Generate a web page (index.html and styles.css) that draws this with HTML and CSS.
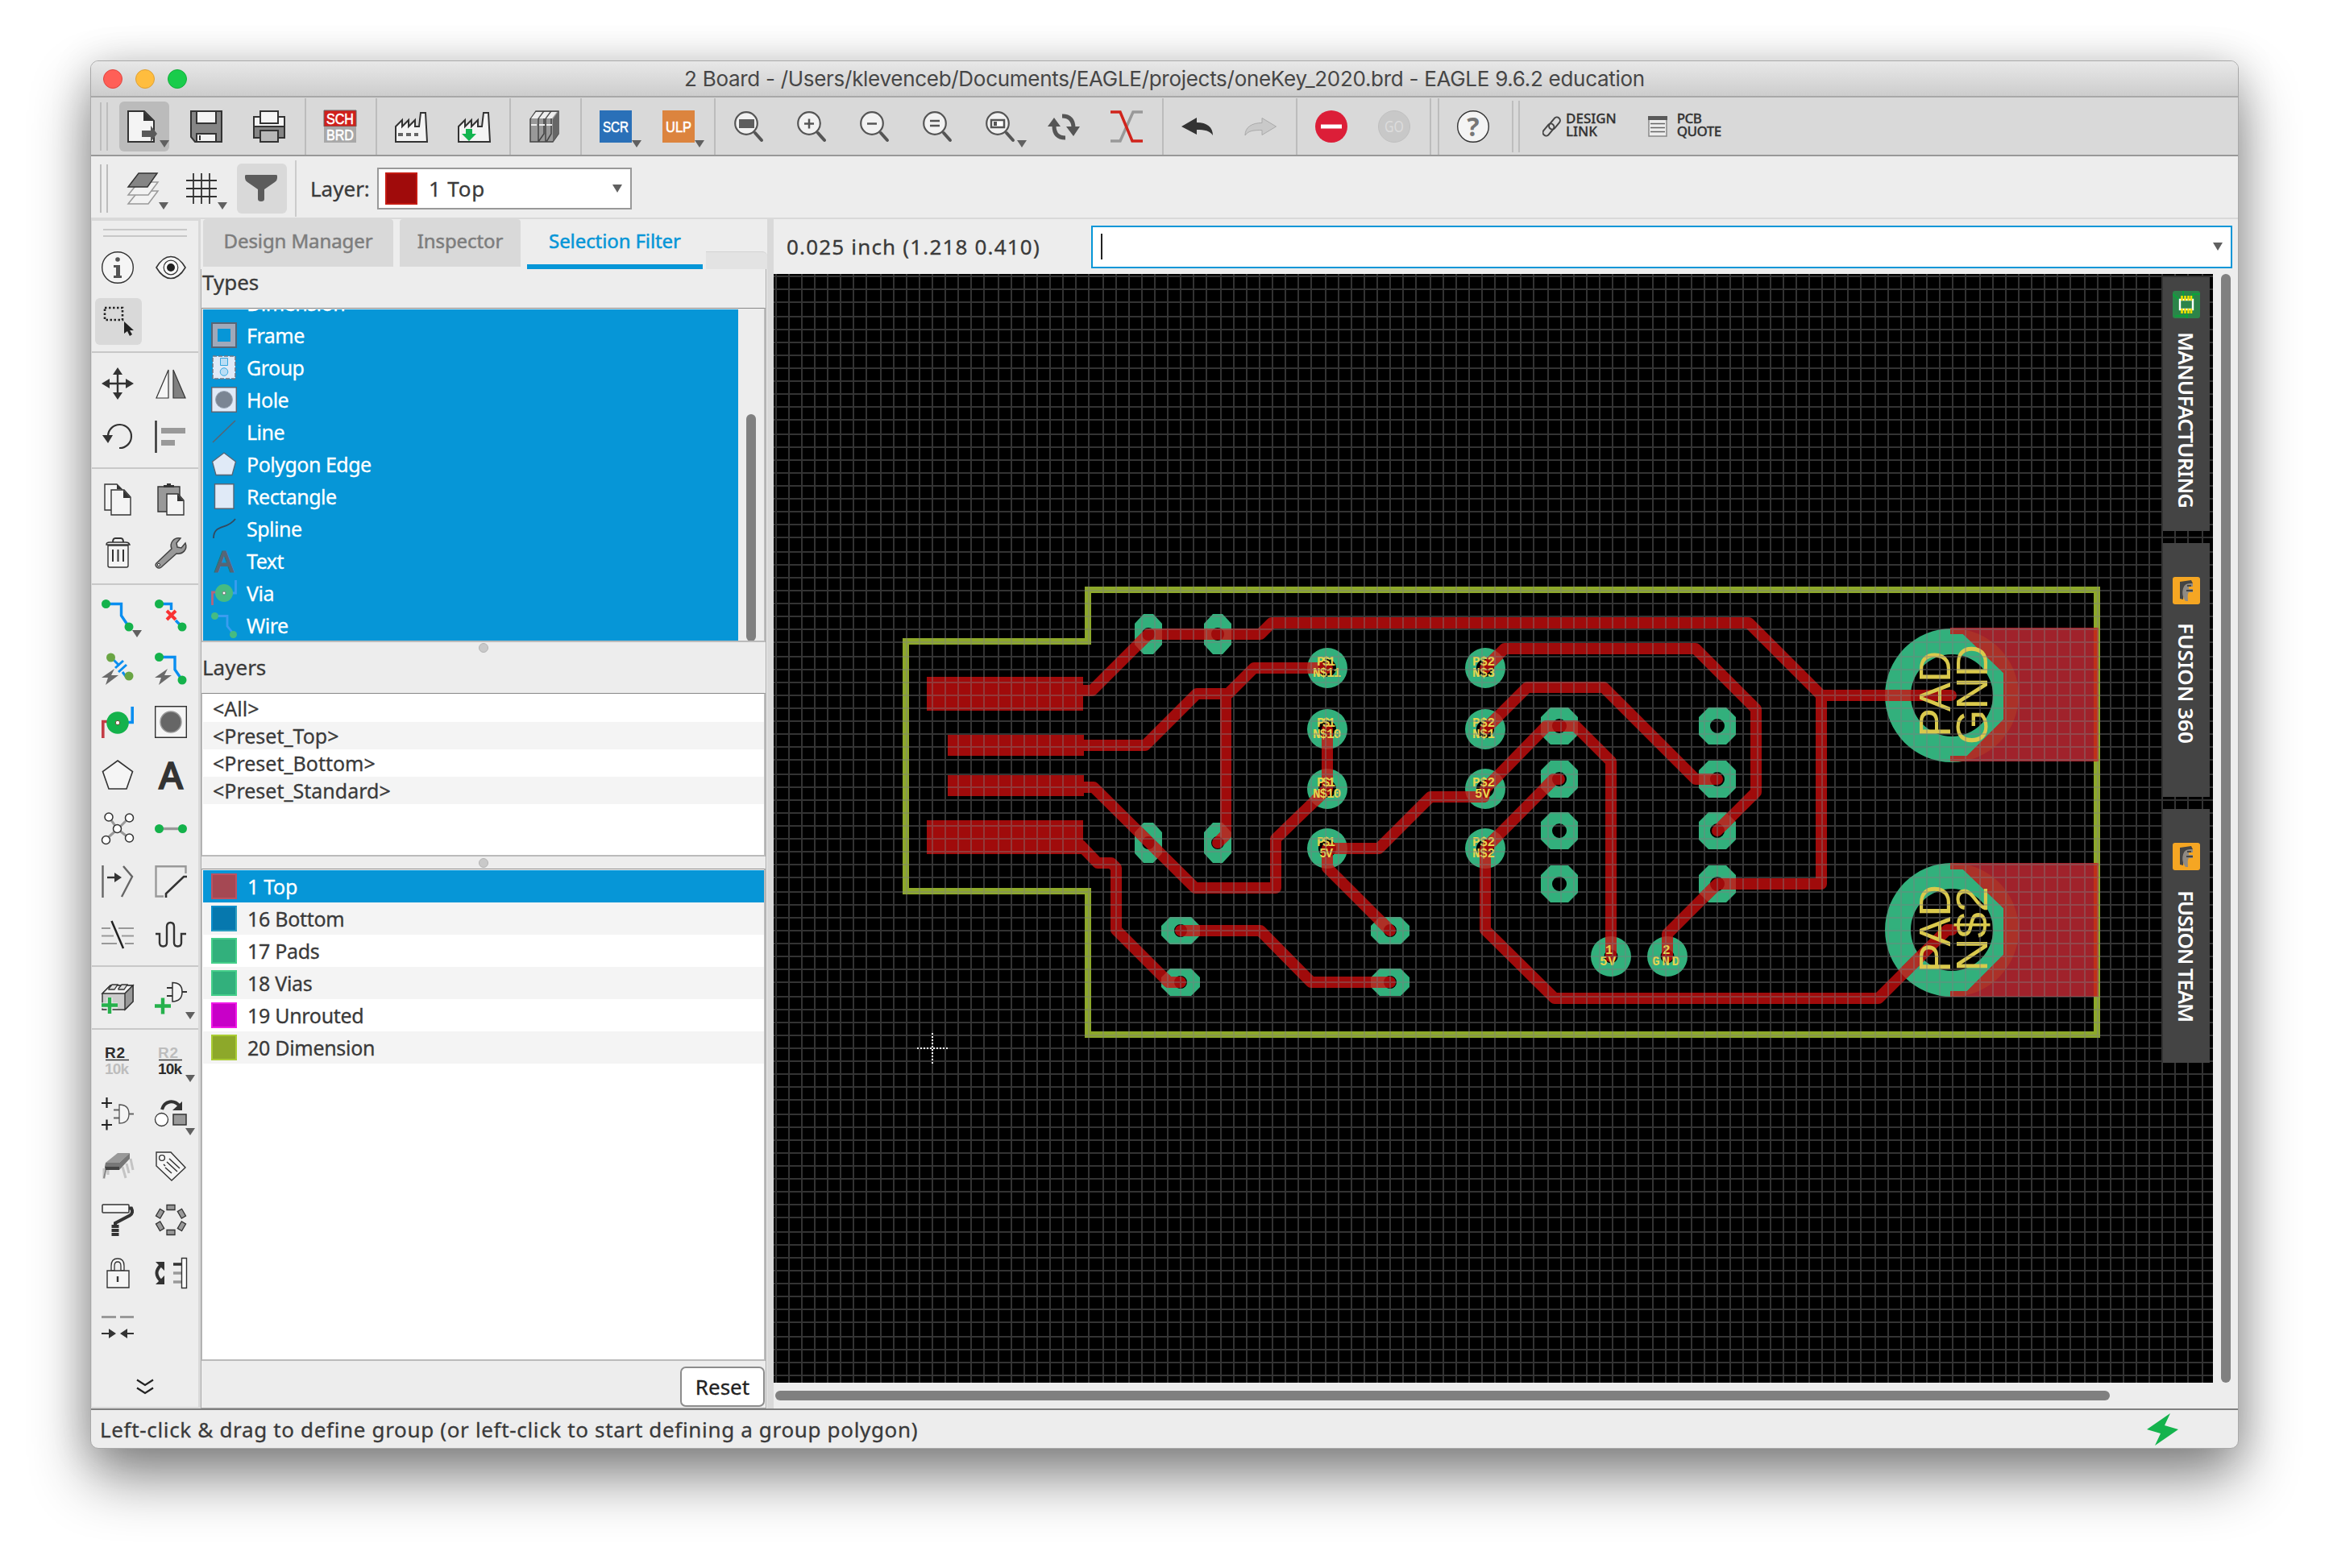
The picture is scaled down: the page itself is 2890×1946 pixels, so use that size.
FILE: index.html
```html
<!DOCTYPE html>
<html lang="en">
<head>
<meta charset="utf-8">
<title>2 Board - EAGLE</title>
<link rel="stylesheet" href="styles.css">
</head>
<body>
<div class="window">
  <header class="titlebar">
    <div class="lights"><i class="light red"></i><i class="light amber"></i><i class="light green"></i></div>
    <span class="title">2 Board - /Users/klevenceb/Documents/EAGLE/projects/oneKey_2020.brd - EAGLE 9.6.2 education</span>
  </header>

  <nav class="toolbar">
    <div class="grip"></div>
    <div class="tool on drop"><svg viewBox="0 0 40 40"><path class="w" d="M1 1h20l12 12v26H1z"/><path d="M20 1v12h12z" fill="#333"/><path d="M18 25h11v-6l8 10-8 10v-6H18z" fill="#5a5a5a"/></svg></div>
    <div class="tool"><svg viewBox="0 0 40 40"><path d="M1 1h38v38H6l-5-6z" fill="#858585" stroke="#333" stroke-width="2"/><path class="w" d="M8 1h24v15H8zM8 29h24v10H8z"/><path d="M12 31v6" stroke="#333" stroke-width="2"/></svg></div>
    <div class="tool"><svg viewBox="0 0 40 40"><path class="w" d="M1 8h38v12H1z"/><path d="M1 20h38v14H1z" fill="#858585" stroke="#333" stroke-width="2"/><path class="w" d="M9 1h22v15H9z"/><path d="M9 25h22v14H9z" fill="#b8b8b8" stroke="#333" stroke-width="2"/></svg></div>
    <div class="sep"></div>
    <div class="tool"><svg viewBox="0 0 40 40"><path d="M0 0h40v20H0z" fill="#d0201b" stroke="#666"/><path d="M0 20h40v20H0z" fill="#a8a8a8"/><text x="20" y="17" class="pix" textLength="34" lengthAdjust="spacingAndGlyphs">SCH</text><text x="20" y="37" class="pix" textLength="34" lengthAdjust="spacingAndGlyphs">BRD</text></svg></div>
    <div class="sep"></div>
    <div class="tool"><svg viewBox="0 0 40 40"><path class="w" d="M1 39V20l8-8v8l8-8v8l8-8v8l5-0 2-17h6l2 36z"/><path d="M4 30h6M14 30h6M24 30h5" stroke="#666" stroke-width="4"/></svg></div>
    <div class="tool"><svg viewBox="0 0 40 40"><path class="w" d="M1 39V20l8-8v8l8-8v8l8-8v8l5-0 2-17h6l2 36z"/><path d="M10 23h8v6h5l-9 9-9-9h5z" fill="#14b550"/></svg></div>
    <div class="sep"></div>
    <div class="tool"><svg viewBox="0 0 40 40"><path d="M2 11 9 1h10v28l-7 10H2z M12 11 19 1h9v28l-6 10H12z M21 11 28 1h9v28l-7 10h-9z" fill="#999" stroke="#444" stroke-width="1.5"/><path d="M30 11 37 1v28l-7 10z" fill="#666"/><path d="M3 10 9 2h8l-6 8zM13 10l6-8h7l-6 8zM22 10l6-8h7l-6 8z" fill="#eee"/><path d="M3 18h7M13 18h7M22 18h7" stroke="#eee" stroke-width="2"/></svg></div>
    <div class="sep"></div>
    <div class="tool drop"><svg viewBox="0 0 40 40"><path d="M0 0h40v40H0z" fill="#2a70b8"/><text x="20" y="27" class="pix" textLength="32" lengthAdjust="spacingAndGlyphs">SCR</text></svg></div>
    <div class="tool drop"><svg viewBox="0 0 40 40"><path d="M0 0h40v40H0z" fill="#dc843e"/><text x="20" y="27" class="pix" textLength="32" lengthAdjust="spacingAndGlyphs">ULP</text></svg></div>
    <div class="sep"></div>
    <div class="tool"><svg viewBox="0 0 40 40"><use href="#lens"/><path d="M7 11h19v11H7z" fill="#5e5e5e"/></svg></div>
    <div class="tool"><svg viewBox="0 0 40 40"><use href="#lens"/><path d="M10 16.500h12M16 10.500v12" stroke="#555" stroke-width="2.500"/></svg></div>
    <div class="tool"><svg viewBox="0 0 40 40"><use href="#lens"/><path d="M10 16.500h12" stroke="#555" stroke-width="2.500"/></svg></div>
    <div class="tool"><svg viewBox="0 0 40 40"><use href="#lens"/><path d="M10 13h12M10 19h12" stroke="#555" stroke-width="2.500"/></svg></div>
    <div class="tool drop"><svg viewBox="0 0 40 40"><use href="#lens"/><path d="M8 12h16v9H8z" fill="#fff" stroke="#555" stroke-width="2.500"/><path d="M11 14h4v5h-4z" fill="#555"/></svg></div>
    <div class="tool"><svg viewBox="0 0 40 40"><path d="M18 7c11 0 14 7 14 15M22 34c-11 0-14-7-14-15" fill="none" stroke="#555" stroke-width="5"/><path d="M23 20h17l-8 12zM0 20h16L8 9z" fill="#555"/></svg></div>
    <div class="tool"><svg viewBox="0 0 40 40"><path d="M0 38h12L28 2h12" fill="none" stroke="#999" stroke-width="3.500"/><path d="M0 2h12l15 36h13" fill="none" stroke="#d0241c" stroke-width="3.500"/></svg></div>
    <div class="sep"></div>
    <div class="tool"><svg viewBox="0 0 40 40"><path d="M0 20 19 9v6c13 0 20 6 20 16-4-6-10-7-20-7v6z" fill="#333"/></svg></div>
    <div class="tool"><svg viewBox="0 0 40 40"><path d="M39.500 20 22 9.500v6C9 15.500 1 21 1 31c4-6 11-6.500 21-6.500v6z" fill="#c9c9c9" stroke="#aaa"/></svg></div>
    <div class="sep"></div>
    <div class="tool"><svg viewBox="0 0 40 40"><circle cx="20" cy="20" r="20" fill="#dc1e38"/><path d="M7 17.500h26v5H7z" fill="#fff"/></svg></div>
    <div class="tool"><svg viewBox="0 0 40 40"><circle cx="20" cy="20" r="19.500" fill="#c8c8c8" stroke="#c0c0c0"/><text x="20" y="27" text-anchor="middle" class="go" textLength="24" lengthAdjust="spacingAndGlyphs">GO</text></svg></div>
    <div class="sep"></div><div class="sep"></div>
    <div class="tool"><svg viewBox="0 0 40 40"><circle cx="20" cy="20" r="19.300" fill="#f4f4f4" stroke="#333" stroke-width="1.400"/><text x="20" y="32" text-anchor="middle" class="help">?</text></svg></div>
    <div class="grip late"></div>
    <a class="link"><svg width="24" height="28" viewBox="0 0 24 28"><g fill="none" stroke="#444" stroke-width="2"><rect x="-4" y="-8.500" width="8" height="17" rx="4" transform="translate(7.500 18) rotate(40)"/><rect x="-4" y="-8.500" width="8" height="17" rx="4" transform="translate(15 10) rotate(40)"/></g></svg><span>DESIGN<br>LINK</span></a>
    <a class="link pcb"><svg width="24" height="26" viewBox="0 0 24 26"><path d="M1 1h22v24H1z" fill="#eee" stroke="#888" stroke-width="1.500"/><path d="M0 0h24v5H0z" fill="#5a5a5a"/><path d="M3 9.500h18M3 14.500h18M3 19.500h18" stroke="#666" stroke-width="1.500"/></svg><span>PCB<br>QUOTE</span></a>
  </nav>

  <nav class="toolbar second">
    <div class="grip"></div>
    <div class="tool drop lay"><svg viewBox="0 0 40 40"><g fill="#f2f2f2" stroke="#999" stroke-width="1.500"><path d="M15 23h24l-12 16H2z"/><path d="M15 12h24L27 28H2z"/></g><path d="M15 1h23L26 18H2z" fill="#858585" stroke="#333" stroke-width="1.500"/></svg></div>
    <div class="tool drop grd"><svg viewBox="0 0 40 40"><path d="M10 1v38M20 1v38M30 1v38M1 10h38M1 20h38M1 30h38" stroke="#333" stroke-width="1.800"/></svg></div>
    <div class="tool on filt"><svg viewBox="0 0 40 40"><path d="M0 4q0-1 2-1h36q2 0 2 1v3q0 3-3 5L24 21v12q0 3-4 3t-4-3V21L3 12Q0 10 0 7z" fill="#5c5c5c"/></svg></div>
    <div class="sep tall"></div>
    <label class="lbl t26">Layer:</label>
    <div class="combo"><i class="swatch"></i><span class="t26 wide">1 Top</span><i class="caret-down"></i></div>
  </nav>

  <main class="main">
    <aside class="side">
      <div class="hgrip"></div>
      <div class="cells">
        <div class="c"><svg viewBox="0 0 40 40"><circle cx="20" cy="20" r="19.300" fill="#f5f5f5" stroke="#333" stroke-width="1.400"/><circle cx="20" cy="10" r="2.800" fill="#555"/><path d="M15 17h8v13h2v3H15v-3h3V20h-3z" fill="#555"/></svg></div>
        <div class="c"><svg viewBox="0 0 40 40"><path d="M2 20Q10 6.500 20 6.500T38 20Q30 33.500 20 33.500T2 20z" fill="#f5f5f5" stroke="#333" stroke-width="1.600"/><circle cx="20" cy="20" r="8.800" fill="#fff" stroke="#333" stroke-width="1.200"/><circle cx="20" cy="20" r="5" fill="#222"/></svg></div>
        <div class="c"><div class="pressed"><svg viewBox="0 0 40 40"><path d="M3 3h22v15H3z" fill="none" stroke="#222" stroke-width="2.600" stroke-dasharray="2.500 2.500"/><path d="M27 20v15l4-3 3 6 3-2-3-5h5z" fill="#222"/></svg></div></div><div class="c"></div>
      </div>
      <div class="hsep"></div>
      <div class="cells">
        <div class="c"><svg viewBox="0 0 40 40"><path d="M7 20h26M20 7v26" stroke="#333" stroke-width="2.400"/><path d="M20 0l6 9H14zM20 40l6-9H14zM0 20l10-6v12zM40 20l-10-6v12z" fill="#333"/></svg></div>
        <div class="c"><svg viewBox="0 0 40 40"><path d="M17 3v35H2z" fill="#f5f5f5" stroke="#333" stroke-width="1.200"/><path d="M23 3v35h15z" fill="#808080" stroke="#333" stroke-width="1.200"/></svg></div>
        <div class="c"><svg viewBox="0 0 40 40"><path d="M8 19A14.500 14.500 0 1 1 22 34" fill="none" stroke="#333" stroke-width="2.200"/><path d="M1 18h13l-6 10z" fill="#333"/></svg></div>
        <div class="c"><svg viewBox="0 0 40 40"><path d="M1.500 0v40" stroke="#333" stroke-width="2.500"/><path d="M8 9h30v7H8zM8 24h17v7H8z" fill="#999"/></svg></div>
      </div>
      <div class="hsep"></div>
      <div class="cells">
        <div class="c"><svg viewBox="0 0 40 40"><path class="w s" d="M4 1h15l6 6v26H4z"/><path class="w s" d="M12 8h16l8 9v22H12z"/><path d="M27 8v10h9zM19 1v6h6z" fill="#333"/></svg></div>
        <div class="c"><svg viewBox="0 0 40 40"><path d="M4 4h27v31H4z" fill="#999" stroke="#333" stroke-width="1.400"/><path d="M11 5V2h4V0h5v2h4v3z" fill="#333"/><path class="w s" d="M15 13h14l7 8v18H15z"/><path d="M28 13v9h8z" fill="#333"/></svg></div>
        <div class="c"><svg viewBox="0 0 40 40"><path class="w s" d="M8 11h25v25q0 2-2 2H10q-2 0-2-2z"/><path class="w s" d="M6 10q0-3 4-3h20q4 0 5 3z"/><path d="M14 7q0-5 3-5h7q3 0 3 5M14 16v15M20.500 16v15M27 16v15" fill="none" stroke="#333" stroke-width="2"/></svg></div>
        <div class="c"><svg viewBox="0 0 40 40"><path d="M2 33 21 15C18 8 24 0 32 2l-5 6 1 5 5 1 5-6c3 8-3 14-11 13L8 38c-4 3-9-2-6-5z" fill="#999" stroke="#444" stroke-width="1.500"/><circle cx="5" cy="35" r="1.600" fill="#fff" stroke="#333"/></svg></div>
      </div>
      <div class="hsep"></div>
      <div class="cells">
        <div class="c drop"><svg viewBox="0 0 40 40"><path d="M6 5.500h18.500V20L34 34" fill="none" stroke="#0a8ef0" stroke-width="3.400"/><circle cx="5.500" cy="5.500" r="5.500" fill="#14b24b"/><circle cx="34" cy="34" r="5.500" fill="#14b24b"/></svg></div>
        <div class="c"><svg viewBox="0 0 40 40"><path d="M6 5.500h14.500V13M26 26l8 8" fill="none" stroke="#0a8ef0" stroke-width="3.400"/><circle cx="5.500" cy="5.500" r="5.500" fill="#14b24b"/><circle cx="34" cy="34" r="5.500" fill="#14b24b"/><path d="M15 14l11 11M26 14 15 25" stroke="#f93232" stroke-width="4"/></svg></div>
        <div class="c"><svg viewBox="0 0 40 40"><path d="M14 8l8 8M26 24l6 8" stroke="#0a8ef0" stroke-width="3"/><path d="M17 19l10-9M21 24l10-9" stroke="#0a8ef0" stroke-width="3"/><circle cx="11.500" cy="6" r="5.500" fill="#6aa544"/><circle cx="34" cy="29" r="5.500" fill="#6aa544"/><path d="M16 20 0 31h8L5 40l16-12h-9z" fill="#6a6a6a"/></svg></div>
        <div class="c"><svg viewBox="0 0 40 40"><path d="M6 5.500h19V21L34 34" fill="none" stroke="#0a8ef0" stroke-width="3.400"/><circle cx="5.500" cy="5.500" r="5.500" fill="#14b24b"/><circle cx="34" cy="34" r="5.500" fill="#14b24b"/><path d="M16 20 0 31h8L5 40l16-12h-9z" fill="#6a6a6a"/></svg></div>
        <div class="c"><svg viewBox="0 0 40 40"><path d="M8 19.500H1.800V40" fill="none" stroke="#c43d46" stroke-width="3.600"/><path d="M32 20.500h6.200V1" fill="none" stroke="#0a8ef0" stroke-width="3.600"/><circle cx="20" cy="21" r="13.800" fill="#14b24b"/><circle cx="20" cy="21" r="2.700" fill="#fff" stroke="#6a5030"/></svg></div>
        <div class="c"><svg viewBox="0 0 40 40"><path d="M.7.700h38.600v38.600H.7z" fill="#f5f5f5" stroke="#333" stroke-width="1.400"/><circle cx="20" cy="20" r="13" fill="#666" stroke="#999" stroke-width="1.500"/></svg></div>
        <div class="c"><svg viewBox="0 0 40 40"><path d="M20 2l18.500 13.500L31 37H9L1.500 15.500z" fill="#f5f5f5" stroke="#333" stroke-width="1.600"/></svg></div>
        <div class="c"><svg viewBox="0 0 40 40"><text x="20" y="37" text-anchor="middle" class="bigA">A</text></svg></div>
        <div class="c"><svg viewBox="0 0 40 40"><path d="M9 6l11 15L34 7M5 34l15-13 14 11" fill="none" stroke="#999" stroke-width="3"/><g fill="#fff" stroke="#333" stroke-width="1.500"><circle cx="9" cy="6" r="5"/><circle cx="34.500" cy="7" r="5"/><circle cx="19.500" cy="20.500" r="5"/><circle cx="5.500" cy="34.500" r="5"/><circle cx="34.500" cy="32" r="5"/></g></svg></div>
        <div class="c"><svg viewBox="0 0 40 40"><path d="M6 20.500h28" stroke="#999" stroke-width="3.400"/><circle cx="5.500" cy="20.500" r="5.500" fill="#14b24b"/><circle cx="34.500" cy="20.500" r="5.500" fill="#14b24b"/></svg></div>
        <div class="c"><svg viewBox="0 0 40 40"><path d="M1.500 0v40M27 1l11 13-13 25" fill="none" stroke="#666" stroke-width="2.400"/><path d="M7 15h10" stroke="#333" stroke-width="2.400"/><path d="M16 9l9 6-9 6z" fill="#333"/></svg></div>
        <div class="c"><svg viewBox="0 0 40 40"><path d="M38.500 10V1.200H1.500v37.300H11" fill="none" stroke="#999" stroke-width="2.400"/><path d="M40 14h-4L14 35v5" fill="none" stroke="#333" stroke-width="2.600"/></svg></div>
        <div class="c"><svg viewBox="0 0 40 40"><path d="M0 12h11M21 12h19M0 21.500h15M25 21.500h15M0 31h19M29 31h11" stroke="#999" stroke-width="2.200"/><path d="M12.500 3 27 37" stroke="#222" stroke-width="2.500"/></svg></div>
        <div class="c"><svg viewBox="0 0 40 40"><path d="M1 19h5v11q0 4.500 4.500 4.500T15 30V10q0-5 4.500-5T24 10v20q0 4.500 4.500 4.500T33 30V19h6" fill="none" stroke="#333" stroke-width="2.400"/></svg></div>
      </div>
      <div class="hsep"></div>
      <div class="cells">
        <div class="c"><svg viewBox="0 0 40 40"><path d="M1 15 11 5h28v20L29 35H1z" fill="#ccc" stroke="#333" stroke-width="1.400"/><path d="M1 15 11 5h28L29 15z" fill="#f3f3f3" stroke="#333" stroke-width="1.400"/><path d="M29 15 39 5v20L29 35z" fill="#999" stroke="#333" stroke-width="1.400"/><path d="M9 9l4-5h7l-4 6H9zM21 9l4-5h7l-4 6h-7z" fill="#ddd" stroke="#333" stroke-width="1.300"/><path d="M10 20v20M0 30h20" stroke="#ededed" stroke-width="7"/><path d="M10 20v20M0 29.500h20" stroke="#26b14c" stroke-width="4.400"/></svg></div>
        <div class="c drop"><svg viewBox="0 0 40 40"><path d="M15 8h7M15 18h7M33 13h7" stroke="#333" stroke-width="2.200"/><path d="M22 1.500q12 0 12 11.500T22 25z" fill="#f5f5f5" stroke="#333" stroke-width="1.500"/><path d="M10 20.500v20M0 30.500h20" stroke="#26b14c" stroke-width="4.400"/></svg></div>
      </div>
      <div class="hsep"></div>
      <div class="cells">
        <div class="c"><svg viewBox="0 0 40 40"><text x="4" y="16.500" class="r2" textLength="25">R2</text><text x="4" y="37" class="r2 dim" textLength="30">10k</text><path d="M5 19.500h29" stroke="#333" stroke-width="1.400"/></svg></div>
        <div class="c drop"><svg viewBox="0 0 40 40"><text x="4" y="16.500" class="r2 dim" textLength="25">R2</text><text x="4" y="37" class="r2" textLength="30">10k</text><path d="M5 19.500h29" stroke="#333" stroke-width="1.400"/></svg></div>
        <div class="c"><svg viewBox="0 0 40 40"><path d="M0 7h13M6.500 0v13M0 34h13M6.500 27.500v13" stroke="#222" stroke-width="2.200"/><path d="M15 15.500h7M15 25.500h7M33 20.500h7" stroke="#666" stroke-width="2.200"/><path d="M22 9q12 0 12 11.500T22 32z" fill="#f5f5f5" stroke="#555" stroke-width="1.300"/></svg></div>
        <div class="c drop"><svg viewBox="0 0 40 40"><path d="M9 15C12 4 24 2 31 11" fill="none" stroke="#333" stroke-width="4"/><path d="M34 5v11H22z" fill="#333"/><circle cx="8.500" cy="27.500" r="8" fill="#fff" stroke="#333" stroke-width="1.300"/><path d="M23 21h16v13H23z" fill="#999" stroke="#333" stroke-width="1.500"/></svg></div>
        <div class="c"><svg viewBox="0 0 40 40"><path d="M3 22v13M8 22v8M26 20l4 14M31 16l3 12M36 10l3 14" stroke="#c4c4c4" stroke-width="3"/><path d="M3 34l3-13" stroke="#888" stroke-width="2"/><path d="M5 15 20 3h15L22 15z" fill="#999"/><path d="M22 15 35 3v7L22 24z" fill="#777"/><path d="M5 15h17v5H4z" fill="#777"/><path d="M4 20h18v4H5z" fill="#444"/></svg></div>
        <div class="c"><svg viewBox="0 0 40 40"><path d="M2 2h18l18 19-17 16L2 19z" fill="#f5f5f5" stroke="#333" stroke-width="1.400"/><circle cx="9" cy="9" r="3.400" fill="#fff" stroke="#333" stroke-width="1.400"/><path d="M18 10l13 12M15 14l13 12M13 21l8 7M11 17l2 2" stroke="#333" stroke-width="1.500"/></svg></div>
        <div class="c"><svg viewBox="0 0 40 40"><rect x="1" y="1" width="33" height="10" rx="1" fill="#f5f5f5" stroke="#333" stroke-width="1.500"/><path d="M34 5.500h3q3 6-2 9L17 24v3" fill="none" stroke="#333" stroke-width="4"/><path d="M17 26v15" stroke="#333" stroke-width="9" stroke-dasharray="4 1"/></svg></div>
        <div class="c"><svg viewBox="0 0 40 40"><g fill="#999" stroke="#333" stroke-width="1.300"><path id="rp" d="M15 1.500h10v6H15z"/><use href="#rp" transform="rotate(60 20 20)"/><use href="#rp" transform="rotate(120 20 20)"/><use href="#rp" transform="rotate(180 20 20)"/><use href="#rp" transform="rotate(240 20 20)"/><use href="#rp" transform="rotate(300 20 20)"/></g></svg></div>
        <div class="c"><svg viewBox="0 0 40 40"><path d="M12 17v-6q0-9 8-9t8 9v6h-4v-6q0-5-4-5t-4 5v6z" fill="#f5f5f5" stroke="#333" stroke-width="1.300"/><path d="M7 17h27v21H7z" fill="#f5f5f5" stroke="#333" stroke-width="1.400"/><path d="M20 24v7" stroke="#333" stroke-width="2.400"/></svg></div>
        <div class="c"><svg viewBox="0 0 40 40"><path d="M9 9Q-4 20 9 31" fill="none" stroke="#333" stroke-width="4"/><path d="M1 6h11v11zM1 34h11V23z" fill="#333"/><path d="M23 9h10" stroke="#333" stroke-width="3.500"/><path d="M23 20h10M23 31h10" stroke="#999" stroke-width="3.500"/><path d="M33.500 1.500h6v37h-6z" fill="#fff" stroke="#333" stroke-width="1.400"/></svg></div>
        <div class="c"><svg viewBox="0 0 40 40"><path d="M0 8.500h18M23 8.500h17" stroke="#999" stroke-width="3"/><path d="M0 29h10M30 29h10" stroke="#333" stroke-width="2.200"/><path d="M9 23l9 6-9 6zM32 23l-9 6 9 6z" fill="#333"/></svg></div><div class="c"></div>
      </div>
      <div class="more"><svg width="22" height="20" viewBox="0 0 22 20"><path d="M1 1.500 11 8 21 1.500M1 11.500 11 18 21 11.500" fill="none" stroke="#222" stroke-width="2.200"/></svg></div>
    </aside>

    <section class="panel">
      <div class="tabs"><span class="tab dm">Design Manager</span><span class="tab insp">Inspector</span><span class="tab sf">Selection Filter</span><span class="stub"></span></div>
      <div class="pbody">
        <div class="head t26">Types</div>
        <div class="list types">
          <ul>
            <li><svg viewBox="0 0 32 32"><path d="M1 0v24M31 0v24M1 8h30" stroke="#a0a9ba" stroke-width="2" fill="none"/></svg><span>Dimension</span></li>
            <li><svg viewBox="0 0 32 32"><path d="M1 1h30v30H1z" fill="#a0a9ba" stroke="#566575" stroke-width="2"/><path d="M8 8h16v16H8z" fill="#0696d7"/></svg><span>Frame</span></li>
            <li><svg viewBox="0 0 32 32"><path d="M2 2h28v28H2z" fill="#e0eaf7" stroke="#6b7685" stroke-width="1.500" stroke-dasharray="5 2"/><path d="M11.500 4.500h9v9h-9z" fill="#b9ddf5" stroke="#35a7df"/><circle cx="16" cy="21.500" r="4.800" fill="#b9ddf5" stroke="#35a7df"/></svg><span>Group</span></li>
            <li><svg viewBox="0 0 32 32"><path d="M.7.700h30.600v30.600H.7z" fill="#e0eaf7" stroke="#566575" stroke-width="1.400"/><circle cx="16" cy="16" r="10.500" fill="#7a8593" stroke="#9aa6b5"/></svg><span>Hole</span></li>
            <li><svg viewBox="0 0 32 32"><path d="M2 29 30 2" stroke="#566575" stroke-width="1.600"/></svg><span>Line</span></li>
            <li><svg viewBox="0 0 32 32"><path d="M16 2l14.500 11L26 29.500H6L1.500 13z" fill="#e0eaf7" stroke="#566575" stroke-width="1.300"/></svg><span>Polygon Edge</span></li>
            <li><svg viewBox="0 0 32 32"><path d="M4.500.700h23.500v30.600H4.500z" fill="#e0eaf7" stroke="#566575" stroke-width="1.400"/></svg><span>Rectangle</span></li>
            <li><svg viewBox="0 0 32 32"><path d="M3 28C3 10 20 18 30 4" fill="none" stroke="#34495e" stroke-width="1.800"/></svg><span>Spline</span></li>
            <li><svg viewBox="0 0 32 32"><text x="16" y="30" text-anchor="middle" class="smA">A</text></svg><span>Text</span></li>
            <li><svg viewBox="0 0 32 32"><path d="M7 15H1.500v16" fill="none" stroke="#b5657c" stroke-width="2.800"/><path d="M25 16h5.500V0" fill="none" stroke="#3a9df0" stroke-width="2.800"/><circle cx="16" cy="16" r="11" fill="#46bb82"/><circle cx="16" cy="16" r="2" fill="#fff" stroke="#777"/></svg><span>Via</span></li>
            <li><svg viewBox="0 0 32 32"><path d="M5 4.500h15V17l8 10" fill="none" stroke="#3a9df0" stroke-width="2.800"/><circle cx="4.500" cy="4.500" r="4.500" fill="#46bb82"/><circle cx="27.500" cy="27.500" r="4.500" fill="#46bb82"/></svg><span>Wire</span></li>
          </ul>
          <div class="track"><i></i></div>
        </div>
        <div class="split"><i></i></div>
        <div class="head lh t26">Layers</div>
        <div class="list presets"><p>&lt;All&gt;</p><p>&lt;Preset_Top&gt;</p><p>&lt;Preset_Bottom&gt;</p><p>&lt;Preset_Standard&gt;</p></div>
        <div class="split s2"><i></i></div>
        <div class="list layers">
          <p class="sel"><i class="l1"></i><span>1 Top</span></p>
          <p><i class="l16"></i><span>16 Bottom</span></p>
          <p><i class="l17"></i><span>17 Pads</span></p>
          <p><i class="l17"></i><span>18 Vias</span></p>
          <p><i class="l19"></i><span>19 Unrouted</span></p>
          <p><i class="l20"></i><span>20 Dimension</span></p>
        </div>
        <div class="foot"><button class="t26">Reset</button></div>
      </div>
    </section>

    <section class="work">
      <div class="cmd"><span class="coord t26">0.025 inch (1.218 0.410)</span><div class="entry"><i class="cursor"></i><i class="caret-down"></i></div></div>
      <div class="view">
        <div class="canvas">
          <svg class="board" width="1786" height="1376" viewBox="960 340 1786 1376">
            <defs>
              <path id="ov" d="M-6-25H6L17-13V13L6 25H-6L-17 13V-13zM0-8A8 8 0 0 0 0 8 8 8 0 0 0 0-8z"/>
              <path id="oh" d="M-13-17H13L24-6V6L13 17H-13L-24 6V-6zM0-8A8 8 0 0 0 0 8 8 8 0 0 0 0-8z"/>
              <path id="oc" d="M-11-23H11L23-11V11L11 23H-11L-23 11V-11zM0-9A9 9 0 0 0 0 9 9 9 0 0 0 0-9z"/>
              <path id="rd" d="M0-25A25 25 0 0 1 0 25 25 25 0 0 1 0-25zM0-11A11 11 0 0 0 0 11 11 11 0 0 0 0-11z"/>
              <path id="rs" d="M0-25A25 25 0 0 1 0 25 25 25 0 0 1 0-25zM0-8.500A8.500 8.500 0 0 0 0 8.500 8.500 8.500 0 0 0 0-8.500z"/>
              <path id="bg" d="M0-83A83 83 0 0 1 0 83 83 83 0 0 1 0-83zM0-51A51 51 0 0 0 0 51 51 51 0 0 0 0-51z"/>
              <path id="land" d="M-2-84H182V82H-2V75H19L64 30V-28L14-76H-2z"/>
              <clipPath id="padclip">
                <use href="#ov" x="1425" y="787"/><use href="#ov" x="1511" y="787"/><use href="#ov" x="1425" y="1046"/><use href="#ov" x="1511" y="1046"/>
                <use href="#oh" x="1465" y="1155"/><use href="#oh" x="1465" y="1219"/><use href="#oh" x="1725" y="1155"/><use href="#oh" x="1725" y="1219"/>
                <use href="#rd" x="1647" y="829"/><use href="#rd" x="1647" y="905"/><use href="#rd" x="1647" y="979"/><use href="#rd" x="1647" y="1053"/>
                <use href="#rd" x="1843" y="829"/><use href="#rd" x="1843" y="905"/><use href="#rd" x="1843" y="979"/><use href="#rd" x="1843" y="1053"/>
                <use href="#rs" x="1999" y="1187"/><use href="#rs" x="2069" y="1187"/>
                <use href="#oc" x="1935" y="901"/><use href="#oc" x="1935" y="967"/><use href="#oc" x="1935" y="1031"/><use href="#oc" x="1935" y="1097"/>
                <use href="#oc" x="2131" y="901"/><use href="#oc" x="2131" y="967"/><use href="#oc" x="2131" y="1031"/><use href="#oc" x="2131" y="1097"/>
                <use href="#bg" x="2422" y="863"/><use href="#bg" x="2422" y="1154"/>
              </clipPath>
              <g id="copper" fill="none" stroke-width="14" stroke-linecap="round" stroke-linejoin="round">
                <path d="M1344 857h11l70-70h139l14-14h592l90 90h161M2260 863v234H2131l-62 62v28"/>
                <path d="M1344 925h77l64-64h39l32-32h91M1521 861v175l-10 10"/>
                <path d="M1344 977h13l126 125h100v-61l64-62v-74"/>
                <path d="M1341 1049l21 22h17l6 6v77l65 65h15M1465 1155h99l63 64h98"/>
                <path d="M1725 1155l-78-78v-24h64l64-64h66l2-10 76-78h36l44 44v242"/>
                <path d="M1843 829l24-24h237l75 75v103l-48 48M1843 905l52-52h95l114 114h27"/>
                <path d="M1935 967h-7l-85 86v101l86 85h402l85-85h6"/>
              </g>
            </defs>
            <path class="outline" d="M1124 796h226v-64h1252v552H1350v-178H1124z"/>
            <path class="pads" clip-path="url(#padclip)" d="M960 340h1786v1376H960z"/>
            <path class="cu" d="M1150 840h194v42h-194zM1176 912h169v26h-169zM1176 962h169v26h-169zM1150 1018h194v42h-194z"/>
            <use href="#copper" stroke="#a00b0b"/>
            <g clip-path="url(#padclip)"><use href="#copper" stroke="#ae3026"/></g>
            <g fill="#a0222b"><use href="#land" x="2422" y="863"/><use href="#land" x="2422" y="1155"/></g>
            <g clip-path="url(#padclip)" fill="#ab3128"><use href="#land" x="2422" y="863"/><use href="#land" x="2422" y="1155"/></g>
            <path d="M2598 779h6v166h-6zM2598 1071h6v166h-6z" fill="#c03018"/>
            <g class="big">
              <text transform="translate(2420 915) rotate(-90)" textLength="107" lengthAdjust="spacingAndGlyphs">PAD</text>
              <text transform="translate(2466 924) rotate(-90)" textLength="124" lengthAdjust="spacingAndGlyphs">GND</text>
              <text transform="translate(2420 1207) rotate(-90)" textLength="109" lengthAdjust="spacingAndGlyphs">PAD</text>
              <text transform="translate(2466 1206) rotate(-90)" textLength="106" lengthAdjust="spacingAndGlyphs">N$2</text>
            </g>
            <g class="tiny">
              <text x="1634" y="826" textLength="23">P$1</text><text x="1629" y="840" textLength="35">N$11</text>
              <text x="1634" y="902" textLength="23">P$1</text><text x="1629" y="916" textLength="35">N$10</text>
              <text x="1634" y="976" textLength="23">P$1</text><text x="1629" y="990" textLength="35">N$10</text>
              <text x="1634" y="1050" textLength="23">P$1</text><text x="1637" y="1064" textLength="17">5V</text>
              <text x="1827" y="826" textLength="28">P$2</text><text x="1827" y="840" textLength="28">N$3</text>
              <text x="1827" y="902" textLength="28">P$2</text><text x="1827" y="916" textLength="28">N$1</text>
              <text x="1827" y="976" textLength="28">P$2</text><text x="1830" y="990" textLength="19">5V</text>
              <text x="1827" y="1050" textLength="28">P$2</text><text x="1827" y="1064" textLength="28">N$2</text>
              <text x="1992" y="1184">1</text><text x="1985" y="1198" textLength="20">5V</text>
              <text x="2063" y="1184">2</text><text x="2050" y="1198" textLength="34">GND</text>
            </g>
            <path id="grid" fill="none" stroke="#808080" stroke-opacity=".4" stroke-width="2"/>
            <path d="M1157 1282v38M1138 1301h38" stroke="#fff" stroke-width="2" stroke-dasharray="2 2" fill="none"/>
          </svg>
          <div class="docks">
            <div class="dock d1"><svg width="34" height="34" viewBox="0 0 34 34"><rect width="34" height="34" rx="3" fill="#2b8449"/><path d="M0 4l10 8M13 0v7M18 34v-7M34 4H25v8M3 31h14" stroke="#0aa33a" stroke-width="2" fill="none"/><path d="M9 11h16v12H9z" fill="#2b8449" stroke="#fff" stroke-width="2.400"/><path d="M11.500 6v6M15.500 6v6M19.500 6v6M23 6v6M11.500 22v6M15.500 22v6M19.500 22v6M23 22v6" stroke="#f2e100" stroke-width="2.600"/></svg><span>MANUFACTURING</span></div>
            <div class="dock d2"><svg width="34" height="34" viewBox="0 0 34 34"><use href="#fmark"/></svg><span>FUSION 360</span></div>
            <div class="dock d3"><svg width="34" height="34" viewBox="0 0 34 34"><use href="#fmark"/></svg><span>FUSION TEAM</span></div>
          </div>
        </div>
        <div class="vbar"></div>
        <div class="hbar"></div>
      </div>
    </section>
  </main>

  <footer class="status"><span class="t26 msg">Left-click &amp; drag to define group (or left-click to start defining a group polygon)</span><svg width="40" height="40" viewBox="0 0 40 40"><path d="M29 0 0 20l17 5-7 15 29-20-17-5z" fill="#14b34d"/></svg></footer>
</div>

<svg width="0" height="0" class="defs">
  <g id="lens"><path d="M27 28l8 9" stroke="#555" stroke-width="4" stroke-linecap="round"/><circle cx="16" cy="16" r="13.800" fill="#f2f2f2" stroke="#555" stroke-width="2.200"/></g>
  <g id="fmark"><rect width="34" height="34" rx="3" fill="#f5a623"/><path d="M9 6l14-2 2 4-9 2-3 5v13l-4-1z" fill="#444"/><path d="M16 30c-4-5-5-12-2-18 2-4 6-4 11-4v4h-5v3h5v4h-5c-2 3-1 7-1 11z" fill="#8f8a84"/><path d="M18 11h5M17 17h8" stroke="#444" stroke-width="2"/></g>
</svg>
<script src="grid.js"></script>
</body>
</html>
```
FILE: styles.css
```css
* { box-sizing: border-box; }
body { margin: 0; background: #fff; font-family: "Noto Sans", "Open Sans", sans-serif; color: #3a3a3a; height: 1946px; overflow: hidden; }
ul, p { margin: 0; padding: 0; list-style: none; }
.defs { position: absolute; }
.window { width: 2666px; height: 1723px; margin: 75px 0 0 112px; border: 1px solid #a9a9a9; border-radius: 10px; background: #ededed; display: flex; flex-direction: column; overflow: hidden; box-shadow: 0 36px 72px rgba(0, 0, 0, .46), 0 4px 50px rgba(0, 0, 0, .16); }
.t26 { font-size: 26px; line-height: 30px; white-space: nowrap; -webkit-text-stroke: .3px; }
.wide { letter-spacing: .8px; }

.titlebar { height: 45px; flex: none; display: flex; align-items: center; background: linear-gradient(#e8e8e8, #cdcdcd); border-bottom: 2px solid #a8a8a8; }
.lights { display: flex; gap: 16px; padding-left: 15px; width: 120px; flex: none; }
.light { width: 24px; height: 24px; border-radius: 50%; border: 1px solid #e0443e; background: #ff5f57; }
.amber { background: #ffbd3e; border-color: #dea035; }
.light.green { background: #19cc4b; border-color: #14ae3c; }
.title { flex: 1; margin-right: 120px; padding-top: 1px; text-align: center; font: 26px/40px Inter, "Liberation Sans", sans-serif; letter-spacing: -.29px; color: #464646; white-space: nowrap; }

.toolbar { height: 73px; flex: none; display: flex; align-items: center; background: #d9d9d9; border-bottom: 2px solid #989898; }
.grip { width: 10px; height: 60px; margin: 0 5px 0 11px; border: solid #bdbdbd; border-width: 0 2px; flex: none; }
.tool { width: 78px; height: 62px; flex: none; display: grid; place-items: center; position: relative; }
.tool svg, .c svg { width: 40px; height: 40px; display: block; overflow: visible; }
.tool.on::before { content: ""; position: absolute; left: 9px; top: 0; width: 62px; height: 62px; border-radius: 6px; background: #bbb; }
.tool.on svg { position: relative; }
.drop::after { content: ""; position: absolute; left: 59px; top: 48px; border: 6px solid transparent; border-top: 9px solid #606060; border-bottom: 0; }
.sep { width: 2px; height: 70px; margin: 0 3px 0 5px; background: #bcbcbc; flex: none; align-self: flex-end; }
.w { fill: #f4f4f4; stroke: #333; stroke-width: 2; }
.w.s { stroke-width: 1.400; }
.pix { font: 19px "Liberation Sans", sans-serif; fill: #fff; stroke: #fff; stroke-width: .6; text-anchor: middle; }
.go { font: 19px "Noto Sans", sans-serif; fill: #dcdcdc; }
.help { font: bold 32px "Noto Sans", sans-serif; fill: #777; }
.grip.late { height: 64px; margin: 0 0 0 9px; }
.link { display: flex; align-items: center; margin-left: 28px; gap: 5px; }
.link.pcb { margin-left: 39px; gap: 12px; }
.link span { font: 500 17px/16px "Noto Sans", sans-serif; color: #333; -webkit-text-stroke: .3px; margin-top: -4px; }
.link.pcb span { letter-spacing: -.6px; }

.second { height: 78px; padding-top: 3px; background: #ededed; border-color: #d9d9d9; }
.second .tool.lay { width: 73px; margin-left: 1px; }
.second .tool.grd { width: 74px; }
.lay::after, .grd::after { left: 57px; top: 48px; }
.second .tool.filt { width: 74px; }
.filt.tool.on::before { left: 7px; background: #d9d9d9; }
.sep.tall { height: 70px; margin: 0 0 0 5px; background: #ccc; align-self: center; }
.lbl { margin-left: 17px; width: 83px; }
.combo { width: 316px; height: 52px; border: 2px solid #999; background: #fff; display: flex; align-items: center; padding: 0 10px 0 8px; }
.swatch { width: 40px; height: 40px; background: #a00b0b; border: 2px solid #c41a12; margin-right: 14px; }
.caret-down { border: 6px solid transparent; border-top: 10px solid #606060; border-bottom: 0; margin-left: auto; }

.main { flex: 1; display: flex; min-height: 0; }
.side { width: 136px; flex: none; border: solid #d9d9d9; border-width: 2px 3px 2px 1px; }
.hgrip { height: 10px; width: 104px; margin: 10px 0 5px 14px; border: solid #c8c8c8; border-width: 2px 0; }
.cells { display: grid; grid-template-columns: 66px 66px; grid-auto-rows: 66px; margin-left: -1px; }
.c { display: grid; place-items: center; position: relative; }
.c.drop::after { left: 51px; top: 51px; }
.pressed { width: 58px; height: 58px; border-radius: 6px; background: #d9d9d9; display: grid; place-items: center; margin: 2px 0 0 2px; }
.hsep { height: 2px; margin: 5px 0; background: #c8c8c8; }
.bigA { font: 500 46px "Noto Sans", sans-serif; fill: #333; stroke: #333; stroke-width: 1.500; }
.smA { font: 500 36px "Noto Sans", sans-serif; fill: #566575; stroke: #566575; }
.r2 { font: bold 19px "Liberation Sans", sans-serif; fill: #2c2c2c; }
.r2.dim { fill: #bdbdbd; }
.more { margin-top: 32px; display: flex; justify-content: center; }

.panel { width: 703px; flex: none; display: flex; flex-direction: column; }
.tabs { height: 62px; display: flex; align-items: flex-start; padding-left: 3px; }
.tab { height: 59px; background: #d9d9d9; color: #7d7d7d; border-radius: 4px 4px 0 0; text-align: center; font-size: 24px; line-height: 54px; margin-right: 8px; white-space: nowrap; letter-spacing: -.1px; -webkit-text-stroke: .5px; }
.dm { width: 236px; }
.insp { width: 150px; }
.sf { width: 218px; height: 62px; background: none; color: #0696d7; border-bottom: 6px solid #0696d7; border-radius: 0; margin-right: 4px; }
.stub { width: 76px; height: 22px; align-self: flex-end; background: #e3e3e3; border-top: 1px solid #d2d2d2; border-radius: 0 6px 0 0; }
.pbody { flex: 1; border: solid #aaa; border-width: 0 1px 1px 1px; margin-right: 1px; display: flex; flex-direction: column; min-height: 0; }
.head { height: 48px; padding: 1px 0 0 1px; }
.list { border: solid #bbb; border-width: 1px 2px 2px 1px; border-top-color: #888; background: #fff; flex: none; -webkit-text-stroke: .3px; }
.types { height: 415px; display: flex; padding: 1px 0 0 1px; background: #ededed; overflow: hidden; }
.types ul { width: 664px; height: 412px; background: #0696d7; overflow: hidden; display: flex; flex-direction: column; justify-content: flex-end; }
.types li { height: 40px; flex: none; display: flex; align-items: center; padding-left: 10px; color: #fff; font-size: 25px; letter-spacing: -.5px; }
.types li svg { width: 32px; height: 32px; margin-right: 12px; flex: none; }
.track { flex: 1; padding: 130px 0 0 10px; }
.track i { display: block; width: 12px; height: 282px; border-radius: 6px; background: #808080; }
.split { height: 14px; display: grid; place-items: center; }
.split i { width: 12px; height: 12px; border-radius: 50%; background: #c9c9c9; border: 1px solid #b4b4b4; }
.lh { height: 49px; padding-top: 2px; }
.presets { height: 203px; padding: 1px 0 0 1px; }
.presets p { height: 34px; padding-left: 12px; line-height: 34px; font-size: 25px; }
.presets p:nth-child(even), .layers p:nth-child(even) { background: #f4f4f4; }
.s2 { height: 15px; }
.layers { height: 611px; padding: 1px 0 0 1px; }
.layers p { height: 40px; display: flex; align-items: center; padding-left: 10px; font-size: 25px; letter-spacing: -.3px; }
.layers i { width: 32px; height: 32px; border: 2px solid; margin-right: 13px; }
.layers .sel { background: #0696d7; color: #fff; }
.layers .l1 { background: #a54853; border-color: #bb5262; }
.layers .l16 { background: #0678ae; border-color: #0b8ecb #2c9dc0 #2c9dc0 #0b8ecb; }
.layers .l17 { background: #32b07c; border-color: #45cf8a; }
.layers .l19 { background: #c800c8; border-color: #f01ae6; }
.layers .l20 { background: #8da82a; border-color: #a9cb33; }
.foot { flex: 1; display: flex; justify-content: flex-end; padding: 7px 1px 0 0; }
.foot button { width: 105px; height: 50px; padding: 0; font-family: inherit; color: #222; background: #fff; border: 2px solid #8c8c8c; border-radius: 7px; }

.work { flex: 1; border-left: 8px solid #d9d9d9; display: flex; flex-direction: column; min-width: 0; }
.cmd { height: 68px; flex: none; display: flex; align-items: center; padding: 0 7px 0 16px; }
.coord { width: 378px; letter-spacing: 1.18px; }
.entry { flex: 1; height: 53px; background: #fff; border: 2px solid #0696d7; display: flex; align-items: center; padding: 0 10px; }
.cursor { width: 2px; height: 32px; background: #222; }
.view { flex: 1; display: grid; grid-template-columns: 1786px 12px; grid-template-rows: 1376px 12px; gap: 10px; }
.canvas { position: relative; background: #000; overflow: hidden; }
.board { display: block; }
.outline { fill: none; stroke: #8da82a; stroke-width: 8; }
.pads { fill: #32b07c; }
.cu { fill: #a00b0b; }
.big { font: 56px "Liberation Sans", sans-serif; fill: #dac94c; }
.tiny { font: bold 16px "Liberation Mono", monospace; fill: #e6d650; }
.docks { position: absolute; right: 4px; top: 4px; display: flex; flex-direction: column; gap: 15px; }
.dock { width: 58px; height: 315px; background: #444; display: flex; flex-direction: column; align-items: center; color: #fff; }
.dock span { writing-mode: vertical-rl; font: 600 26px/58px "Noto Sans", sans-serif; white-space: nowrap; }
.d1 { padding-top: 17px; gap: 17px; }
.d1 span { letter-spacing: -.8px; }
.d2 { padding-top: 42px; gap: 23px; }
.d3 { padding-top: 42px; gap: 25px; }
.d3 span { letter-spacing: -1.2px; }
.vbar, .hbar { background: #808080; border-radius: 6px; }
.hbar { margin: 0 128px 0 2px; }

.status { height: 49px; flex: none; border-top: 2px solid #808080; display: flex; align-items: center; justify-content: space-between; padding: 0 73px 0 11px; }
.msg { letter-spacing: .66px; }
```
FILE: grid.js
```js
// Layout grid of the board, snapped to whole 2px cells.
let d = '';
for (let k = -51; k < 61; k++) d += `M${2 * Math.floor(887.03 + k * 8.1195) + 1} 340v1376`;
for (let k = -30; k < 57; k++) d += `M960 ${2 * Math.floor(407.03 + k * 8.115) + 1}h1786`;
document.getElementById('grid').setAttribute('d', d);
```
